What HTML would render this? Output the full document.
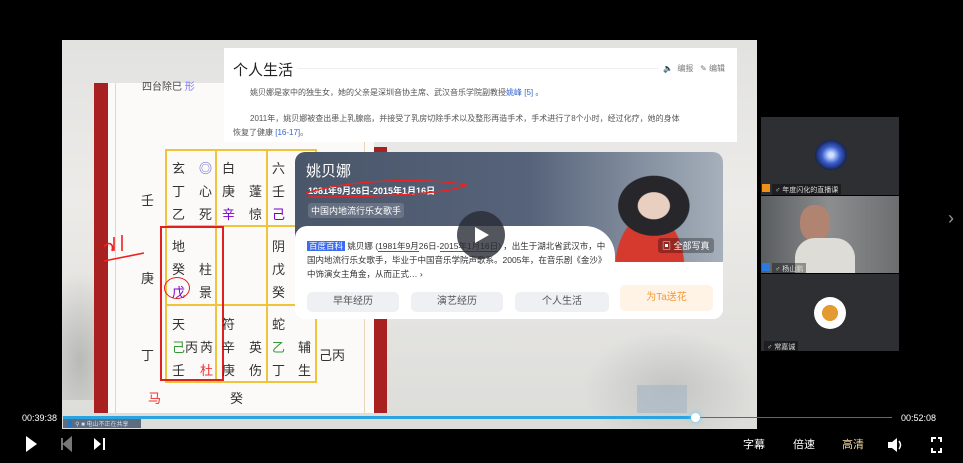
<!DOCTYPE html>
<html><head><meta charset="utf-8"><style>
*{margin:0;padding:0;box-sizing:border-box}
body{width:963px;height:463px;background:#000;position:relative;overflow:hidden;font-family:"Liberation Sans","Noto Sans CJK SC",sans-serif}
.a{position:absolute}
.vid{left:62px;top:40px;width:695px;height:389px;background:linear-gradient(180deg,#e2e2e0 0%,#ecebe8 40%,#dcdcd9 100%);overflow:hidden}
.cn{font-family:"Liberation Sans","Noto Sans CJK SC",sans-serif}
.g{font-size:13px;color:#333}
.t{font-size:8px;color:#555}
.btn{background:#eef0f3;border-radius:5px;font-size:10px;color:#555;text-align:center;line-height:20px;height:20px}
.tile{left:761px;width:138px;background:#2e2f32}
.nm{font-size:7px;color:#ddd;background:rgba(0,0,0,.35);padding:1px 3px}
</style></head><body>
<div class="a vid">
  <div class="a" style="left:0;top:230px;width:60px;height:130px;background:radial-gradient(ellipse at 30% 70%,#b9b9b6,transparent 70%)"></div>
  <div class="a" style="left:520px;top:290px;width:175px;height:99px;background:radial-gradient(ellipse at 50% 60%,#c4c5c3,transparent 70%)"></div>
  <div class="a" style="left:575px;top:345px;width:50px;height:28px;background:#a9b8c4;opacity:.7"></div>
  <div class="a" style="left:32px;top:43px;width:14px;height:330px;background:#a92021"></div>
  <div class="a" style="left:46px;top:43px;width:266px;height:330px;background:#fbfaf8"></div>
  <div class="a" style="left:53px;top:43px;width:1px;height:330px;background:#e6d7b8"></div>
  <div class="a" style="left:302px;top:43px;width:1px;height:330px;background:#e6d7b8"></div>
  <div class="a" style="left:312px;top:107px;width:13px;height:266px;background:#a92021"></div>
  <div class="a cn" style="left:80px;top:38px;font-size:10px;color:#444">四台除巳 <span style="color:#77f">形</span></div>
</div>
<div class="a" style="left:165px;top:149px;width:152px;height:234px;border:2px solid #f0c43a"></div>
<div class="a" style="left:215px;top:149px;width:2px;height:234px;background:#f0c43a"></div>
<div class="a" style="left:266px;top:149px;width:2px;height:234px;background:#f0c43a"></div>
<div class="a" style="left:165px;top:225px;width:152px;height:2px;background:#f0c43a"></div>
<div class="a" style="left:165px;top:304px;width:152px;height:2px;background:#f0c43a"></div>
<div class="a" style="left:160px;top:226px;width:64px;height:155px;border:2px solid #e02020"></div>
<div class="a cn g" style="left:172px;top:157px;line-height:23px">玄<br>丁<br>乙</div>
<div class="a cn g" style="left:199px;top:157px;line-height:23px"><span style="color:#55c">◎</span><br>心<br>死</div>
<div class="a cn g" style="left:222px;top:157px;line-height:23px">白<br>庚<br><span style="color:#70c">辛</span></div>
<div class="a cn g" style="left:249px;top:157px;line-height:23px">&nbsp;<br>蓬<br>惊</div>
<div class="a cn g" style="left:272px;top:157px;line-height:23px">六<br>壬<br><span style="color:#70c">己</span></div>
<div class="a cn g" style="left:172px;top:235px;line-height:23px">地<br>癸<br><span style="color:#70c">戊</span></div>
<div class="a cn g" style="left:199px;top:258px;line-height:23px">柱<br>景</div>
<div class="a cn g" style="left:272px;top:235px;line-height:23px">阴<br>戊<br>癸</div>
<div class="a" style="left:164px;top:277px;width:26px;height:22px;border:1.5px solid #e02020;border-radius:50%"></div>
<div class="a cn g" style="left:172px;top:313px;line-height:23px">天<br><span style="color:#393">己</span>丙<br>壬</div>
<div class="a cn g" style="left:200px;top:336px;line-height:23px">芮<br><span style="color:#e33">杜</span></div>
<div class="a cn g" style="left:222px;top:313px;line-height:23px">符<br>辛<br>庚</div>
<div class="a cn g" style="left:249px;top:336px;line-height:23px">英<br>伤</div>
<div class="a cn g" style="left:272px;top:313px;line-height:23px">蛇<br><span style="color:#393">乙</span><br>丁</div>
<div class="a cn g" style="left:298px;top:336px;line-height:23px">辅<br>生</div>
<div class="a cn g" style="left:319px;top:345px">己丙</div>
<div class="a cn g" style="left:141px;top:190px">壬</div>
<div class="a cn g" style="left:141px;top:268px">庚</div>
<div class="a cn g" style="left:141px;top:345px">丁</div>
<div class="a cn" style="left:148px;top:388px;font-size:13px;color:#e33">马</div>
<div class="a cn g" style="left:230px;top:388px">癸</div>
<svg class="a" style="left:100px;top:225px" width="60" height="40"><path d="M4 22c4-6 10-4 8 4M14 12v14M22 10v16M4 36l40-8" stroke="#e22" stroke-width="1.6" fill="none"/></svg>
<div class="a" style="left:224px;top:48px;width:513px;height:94px;background:#fff"></div>
<div class="a cn" style="left:233px;top:59px;font-size:15px;color:#222">个人生活</div>
<div class="a" style="left:298px;top:68px;width:360px;height:1px;background:#eee"></div>
<div class="a cn t" style="left:663px;top:63px;color:#777">🔈 &nbsp;编报 &nbsp;&nbsp;✎ 编辑</div>
<div class="a cn t" style="left:250px;top:87px">姚贝娜是家中的独生女，她的父亲是深圳音协主席、武汉音乐学院副教授<span style="color:#36c">姚峰</span> <span style="color:#36c">[5]</span> 。</div>
<div class="a cn t" style="left:250px;top:113px">2011年，姚贝娜被查出患上乳腺癌，并接受了乳房切除手术以及整形再造手术，手术进行了8个小时，经过化疗，她的身体</div>
<div class="a cn t" style="left:233px;top:127px">恢复了健康 <span style="color:#36c">[16-17]</span>。</div>
<div class="a" style="left:295px;top:152px;width:428px;height:167px;background:#fff;border-radius:10px"></div>
<div class="a" style="left:295px;top:152px;width:428px;height:112px;background:linear-gradient(90deg,#4a5669,#56637a 55%,#a6b0bb);border-radius:10px 10px 0 0"></div>
<div class="a" style="left:590px;top:152px;width:133px;height:112px;background:radial-gradient(ellipse at 48% 48%,#e9cfbf 0 16%,#26262b 17% 36%,transparent 37%),radial-gradient(ellipse at 45% 105%,#d6392e 0 33%,transparent 34%)"></div>
<div class="a" style="left:295px;top:226px;width:320px;height:60px;background:#fff;border-radius:12px 30px 0 0"></div>
<div class="a" style="left:295px;top:262px;width:428px;height:57px;background:#fff;border-radius:0 0 10px 10px"></div>
<div class="a cn" style="left:306px;top:160px;font-size:15px;color:#fff">姚贝娜</div>
<div class="a cn" style="left:308px;top:184px;font-size:9px;color:#fff;font-weight:bold">1981年9月26日-2015年1月16日</div>
<div class="a cn" style="left:308px;top:203px;font-size:9px;color:#fff;background:rgba(255,255,255,.15);padding:1px 3px;border-radius:3px">中国内地流行乐女歌手</div>
<svg class="a" style="left:300px;top:175px" width="170" height="30"><path d="M6 18C60 2 140 4 166 10 150 20 60 22 8 22" stroke="#e22" stroke-width="1.4" fill="none"/></svg>
<div class="a cn" style="left:658px;top:238px;font-size:9px;color:#fff;background:rgba(0,0,0,.3);padding:1px 4px;border-radius:3px">▣ 全部写真</div>
<div class="a cn" style="left:307px;top:239px;font-size:8.5px;color:#333;line-height:14px;width:300px"><span style="background:#3b6cf0;color:#fff;padding:0 2px">百度百科</span> 姚贝娜 (<span style="border-bottom:1px solid #e22">1981年9月</span>26日-<span style="border-bottom:1px solid #e22">2015年1月16日</span>) ，出生于湖北省武汉市，中国内地流行乐女歌手，毕业于中国音乐学院声歌系。2005年，在音乐剧《金沙》中饰演女主角金，从而正式… ›</div>
<div class="a btn cn" style="left:307px;top:292px;width:92px">早年经历</div>
<div class="a btn cn" style="left:411px;top:292px;width:92px">演艺经历</div>
<div class="a btn cn" style="left:515px;top:292px;width:94px">个人生活</div>
<div class="a btn cn" style="left:620px;top:285px;width:93px;height:26px;line-height:26px;background:#fff3e6;color:#f29a38">为Ta送花</div>
<div class="a" style="left:457px;top:211px;width:48px;height:48px;border-radius:50%;background:rgba(40,44,52,.8)"></div>
<svg class="a" style="left:474px;top:226px" width="16" height="18"><path d="M1 1L15 9L1 17Z" fill="#fff"/></svg>
<div class="a" style="left:63px;top:416px;width:78px;height:12px;background:rgba(40,60,90,.7)"></div>
<div class="a" style="left:66px;top:419px;font-size:6px;color:#cde">👤 ⚲ ■ 电山不正在共享</div>
<div class="a" style="left:63px;top:416px;width:633px;height:3px;background:#2aa4e0"></div>
<div class="a" style="left:696px;top:417px;width:196px;height:1px;background:#666"></div>
<div class="a" style="left:691px;top:413px;width:9px;height:9px;border-radius:50%;background:#fff;box-shadow:0 0 6px #6cf"></div>
<div class="a" style="left:22px;top:413px;font-size:9px;color:#fff">00:39:38</div>
<div class="a" style="left:901px;top:413px;font-size:9px;color:#fff">00:52:08</div>
<svg class="a" style="left:24px;top:435px" width="100" height="18"><path d="M2 1L13 9L2 17Z" fill="#fff"/><path d="M38 3v12M47 3L40 9L47 15Z" fill="#777" stroke="#777" stroke-width="2"/><path d="M70 3L77 9L70 15Z" fill="#fff"/><path d="M80 3v12" stroke="#fff" stroke-width="2"/></svg>
<div class="a cn" style="left:743px;top:436px;font-size:11px;color:#fff">字幕</div>
<div class="a cn" style="left:793px;top:436px;font-size:11px;color:#fff">倍速</div>
<div class="a cn" style="left:842px;top:436px;font-size:11px;color:#f0d8a0">高清</div>
<svg class="a" style="left:886px;top:436px" width="56" height="18"><path d="M2 6h4l5-4v14l-5-4H2Z" fill="#fff"/><path d="M13 5q3 4 0 8" stroke="#fff" stroke-width="1.5" fill="none"/><path d="M46 6V2h4M52 2h3v4M46 12v4h4M52 16h3v-4" stroke="#fff" stroke-width="2" fill="none"/></svg>
<div class="a tile" style="top:117px;height:78px"></div>
<div class="a" style="left:815px;top:140px;width:32px;height:30px;border-radius:50%;background:radial-gradient(ellipse,#cfe0ff 0 10%,#3b5fd0 40%,#101a40 75%)"></div>
<div class="a" style="left:762px;top:184px;width:8px;height:8px;background:#f0901c"></div>
<div class="a nm cn" style="left:772px;top:184px">♂ 年度闪化的直播课</div>
<div class="a tile" style="top:196px;height:77px;background:linear-gradient(90deg,#5a5d60,#8b8d8e 50%,#6c6e70)"></div>
<div class="a" style="left:800px;top:205px;width:30px;height:36px;border-radius:45%;background:#b08470"></div>
<div class="a" style="left:795px;top:238px;width:60px;height:35px;border-radius:20px 20px 0 0;background:#dedcd6"></div>
<div class="a" style="left:762px;top:263px;width:8px;height:8px;background:#2a7ae0"></div>
<div class="a nm cn" style="left:772px;top:263px">♂ 杨山鹏</div>
<div class="a tile" style="top:274px;height:77px"></div>
<div class="a" style="left:814px;top:297px;width:32px;height:32px;border-radius:50%;background:radial-gradient(circle,#e39a30 0 35%,#fff 36%)"></div>
<div class="a nm cn" style="left:764px;top:341px">♂ 常嘉诚</div>
<div class="a" style="left:948px;top:208px;font-size:18px;color:#999">›</div>
</body></html>
